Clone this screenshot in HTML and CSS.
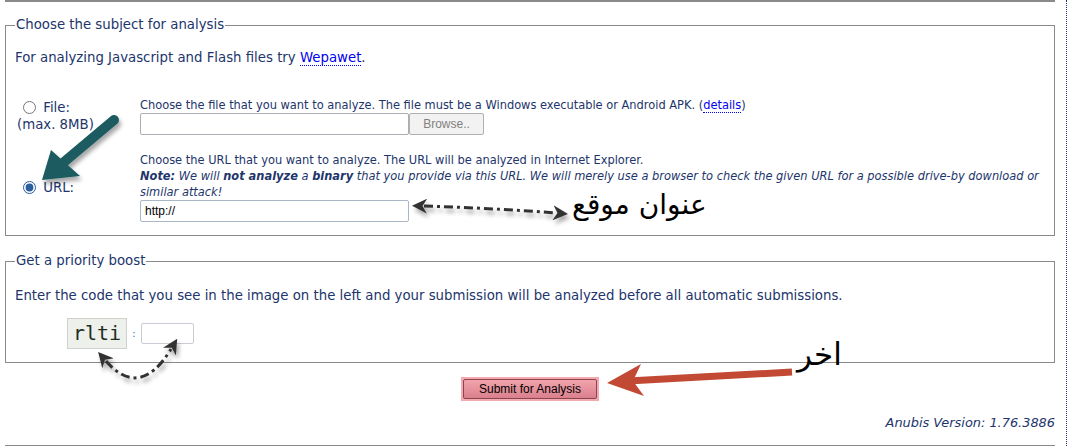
FILE: index.html
```html
<!DOCTYPE html>
<html lang="en">
<head>
    <meta charset="UTF-8">
    <title>Anubis - Submit</title>
    <link rel="stylesheet" href="styles.css">
</head>
<body>
<div class="page">
    <div class="rule"></div>

    <fieldset class="box">
        <legend>Choose the subject for analysis</legend>
        <p class="intro">For analyzing Javascript and Flash files try <a href="#">Wepawet</a>.</p>

        <div class="choices">
            <label class="pick">
                <span class="opt"><input type="radio" name="kind" value="file"> File:</span>
                <span class="max">(max. 8MB)</span>
            </label>
            <div class="detail">
                <div class="note">Choose the file that you want to analyze. The file must be a Windows executable or Android APK. (<a href="#">details</a>)</div>
                <div class="file-row">
                    <input type="text" class="field" readonly>
                    <button type="button" class="browse">Browse..</button>
                </div>
            </div>

            <label class="pick">
                <span class="opt"><input type="radio" name="kind" value="url" checked> URL:</span>
            </label>
            <div class="detail">
                <div class="note">Choose the URL that you want to analyze. The URL will be analyzed in Internet Explorer.</div>
                <div class="note warn"><b>Note:</b> We will <b>not analyze</b> a <b>binary</b> that you provide via this URL. We will merely use a browser to check the given URL for a possible drive-by download or similar attack!</div>
                <input type="text" class="field" value="http://">
            </div>
        </div>
    </fieldset>

    <fieldset class="box boost">
        <legend>Get a priority boost</legend>
        <p class="intro">Enter the code that you see in the image on the left and your submission will be analyzed before all automatic submissions.</p>
        <div class="captcha-row">
            <span class="captcha">rlti</span>
            <span class="colon">:</span>
            <input type="text" class="code">
        </div>
    </fieldset>

    <div class="submit-row">
        <span class="glow"><button type="button" class="submit">Submit for Analysis</button></span>
    </div>

    <div class="version">Anubis Version: 1.76.3886</div>
    <div class="rule"></div>

    <!-- hand-drawn notes on top of the screenshot -->
    <svg class="marks" width="1069" height="446" viewBox="0 0 1069 446">
        <defs>
            <filter id="shade" x="-20%" y="-20%" width="140%" height="160%">
                <feDropShadow dx="2" dy="4" stdDeviation="2" flood-color="#000" flood-opacity="0.35"/>
            </filter>
            <marker id="tipL" viewBox="0 0 10 10" refX="2" refY="5" markerWidth="5" markerHeight="5" orient="auto-start-reverse">
                <path d="M0 0 L10 5 L0 10 L3 5 Z" fill="#333"/>
            </marker>
        </defs>

        <g filter="url(#shade)">
            <line x1="114" y1="120" x2="64" y2="162" stroke="#1b5b60" stroke-width="10" stroke-linecap="round"/>
            <polygon points="42,180 51,150 80,176" fill="#1b5b60"/>
        </g>

        <g filter="url(#shade)" fill="none" stroke="#333" stroke-width="3" stroke-dasharray="9 4 3 4">
            <path d="M424 206 Q 490 208 556 213" marker-start="url(#tipL)" marker-end="url(#tipL)"/>
            <path d="M106 361 Q 140 400 171 349" marker-start="url(#tipL)" marker-end="url(#tipL)"/>
        </g>

        <g>
            <line x1="792" y1="372" x2="628" y2="381" stroke="#c24a35" stroke-width="7"/>
            <polygon points="607,383 641,364 633,381 644,396" fill="#c24a35"/>
        </g>
    </svg>
    <span class="ar ar-url">عنوان موقع</span>
    <span class="ar ar-last">اخر</span>
</div>
</body>
</html>
```

FILE: styles.css
```css
body {
    margin: 0;
    padding: 0;
    background-color: #ffffff;
    font-family: "DejaVu Sans", Verdana, sans-serif;
    font-size: 13.3px;
    color: #22356b;
}

.page {
    position: relative;
    width: 1067px;
    height: 446px;
    box-sizing: border-box;
    padding: 0 11px 0 5px;
    border-right: 1px dotted #22356b;
    overflow: hidden;
}

.rule {
    border-top: 2px solid #8a8a8a;
}

a {
    color: #0000ee;
    text-decoration: none;
    border-bottom: 1px dotted #0000ee;
}

.box {
    margin: 15px 0 0;
    padding: 0 9px 13px;
    border: 1px solid #8a8a8a;
    min-width: 0;
}

.box legend {
    padding: 0 1px;
    line-height: 16px;
    font-size: 13.3px;
}

.intro {
    margin: 17px 0 0;
    line-height: 16px;
}

.choices {
    display: grid;
    grid-template-columns: 70px 1fr;
    column-gap: 55px;
    row-gap: 17px;
    margin-top: 31px;
}

.pick {
    display: flex;
    flex-direction: column;
    align-items: flex-start;
    justify-content: center;
    line-height: 17px;
    white-space: nowrap;
}

.opt {
    padding-left: 8px;
}

.max {
    padding-left: 2px;
}

.pick input {
    margin: 0 3px 0 0;
    vertical-align: -2px;
    accent-color: #2b5e9c;
}

.note {
    font-family: "DejaVu Sans Condensed", "Liberation Sans", sans-serif;
    font-stretch: condensed;
    font-size: 12.7px;
    line-height: 16px;
}

.warn {
    font-style: italic;
}

.file-row {
    display: flex;
}

.field {
    width: 269px;
    height: 22px;
    box-sizing: border-box;
    margin: 0;
    padding: 1px 4px;
    border: 1px solid #a9b7c6;
    border-radius: 2px;
    font-family: "Liberation Sans", Arial, sans-serif;
    font-size: 12px;
    color: #000;
}

.file-row .field {
    border-color: #abadb3;
}

.browse {
    width: 75px;
    height: 22px;
    margin: 0;
    padding: 0;
    background-color: #f2f2f2;
    border: 1px solid #b0b0b0;
    border-radius: 2px;
    font-family: "Liberation Sans", Arial, sans-serif;
    font-size: 12px;
    color: #808080;
}

.boost {
    margin-top: 17px;
    padding-bottom: 13px;
}

.boost .intro {
    margin-top: 19px;
}

.captcha-row {
    display: flex;
    align-items: center;
    margin: 14px 0 0 52px;
}

.captcha {
    width: 58px;
    height: 29px;
    line-height: 29px;
    text-align: center;
    background-color: #eef0ec;
    border: 1px solid #cfd2cc;
    font-family: "DejaVu Sans Mono", monospace;
    font-size: 20px;
    color: #1f2e1d;
}

.colon {
    margin: 0 5px 0 5px;
    color: #3a7acc;
    font-size: 11px;
}

.code {
    width: 53px;
    height: 21px;
    box-sizing: border-box;
    margin: 0;
    border: 1px solid #c8ccd2;
    border-radius: 2px;
}

.submit-row {
    display: flex;
    justify-content: center;
    margin-top: 14px;
}

.glow {
    display: inline-block;
    padding: 2px;
    background-color: #f3a9ad;
}

.submit {
    width: 134px;
    height: 20px;
    margin: 0;
    padding: 0;
    background: linear-gradient(#f2a4ac, #d9808d);
    border: 1px solid #8c4450;
    border-radius: 2px;
    font-family: "Liberation Sans", Arial, sans-serif;
    font-size: 12px;
    color: #000;
}

.version {
    margin: 14px 0 14px;
    line-height: 16px;
    text-align: right;
    font-style: italic;
    font-size: 12.9px;
}

.marks {
    position: absolute;
    left: 0;
    top: 0;
    pointer-events: none;
}

.ar {
    position: absolute;
    font-family: "DejaVu Sans", sans-serif;
    color: #000;
    direction: rtl;
    white-space: nowrap;
}

.ar-url {
    left: 572px;
    top: 188px;
    font-size: 28px;
}

.ar-last {
    left: 797px;
    top: 336px;
    font-size: 31px;
}
```
